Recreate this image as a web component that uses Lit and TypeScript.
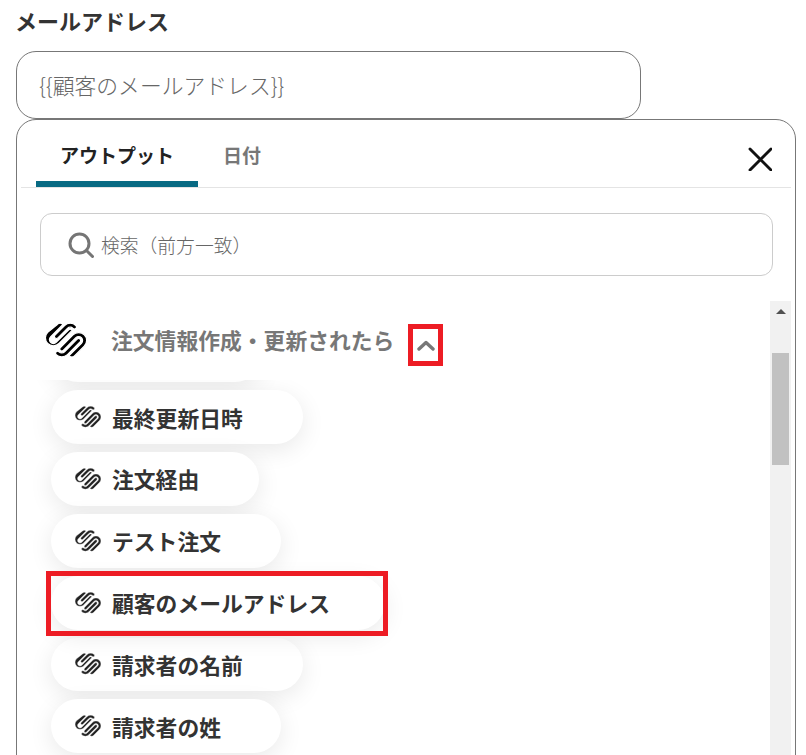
import { LitElement, css, html, svg } from 'lit'
import { customElement } from 'lit/decorators.js'

const LOGO = svg`<path d="M22.655 8.719c-1.802-1.801-4.726-1.801-6.564 0l-7.351 7.35c-.45.45-.45 1.2 0 1.65.45.449 1.2.449 1.65 0l7.351-7.351c.899-.899 2.362-.899 3.264 0 .9.9.9 2.364 0 3.264l-7.201 7.2c.9.899 2.364.899 3.264 0l5.55-5.549c1.86-1.864 1.86-4.789.037-6.564zm-2.475 2.437c-.451-.45-1.201-.45-1.65 0l-7.354 7.389c-.9.899-2.361.899-3.262 0-.45-.45-1.2-.45-1.65 0s-.45 1.2 0 1.65c1.801 1.801 4.726 1.801 6.564 0l7.351-7.35c.449-.487.449-1.239.001-1.689zm-2.439-7.875c-1.801-1.801-4.726-1.801-6.564 0l-5.55 5.55c-.45.45-.45 1.2 0 1.65s1.2.45 1.65 0l5.55-5.55c.899-.9 2.361-.9 3.263 0 .45.45 1.2.45 1.65 0 .45-.45.45-1.2.001-1.65zm-2.476 2.475c-.45-.45-1.2-.45-1.65 0l-7.351 7.351c-.899.9-2.362.9-3.263 0-.9-.9-.9-2.364 0-3.263l7.2-7.2c-.9-.9-2.361-.9-3.263 0L1.35 7.2c-1.8 1.801-1.8 4.726 0 6.564 1.801 1.801 4.725 1.801 6.564 0l7.35-7.351c.451-.488.451-1.238 0-1.688z"/>`

const CHIPS = [
  { label: '最終更新日時' },
  { label: '注文経由' },
  { label: 'テスト注文' },
  { label: '顧客のメールアドレス', picked: true },
  { label: '請求者の名前' },
  { label: '請求者の姓' },
]

@customElement('app-root')
export class AppRoot extends LitElement {
  render() {
    return html`
      <div class="page">
        <div class="label">メールアドレス</div>
        <div class="input">{{顧客のメールアドレス}}</div>
        <div class="panel">
          <div class="tabs">
            <div class="tab active">アウトプット</div>
            <div class="tab">日付</div>
            <svg class="close" viewBox="0 0 24 24" fill="none" stroke="#111" stroke-width="2.9" stroke-linecap="round">
              <path d="M2 2L23 23M23 2L2 23" />
            </svg>
          </div>
          <div class="search">
            <svg class="search-icon" viewBox="0 0 26 26" fill="none" stroke="#757575" stroke-width="3">
              <circle cx="11.5" cy="11.5" r="9.5" />
              <path d="M18.5 18.5L24.5 24.5" stroke-linecap="round" />
            </svg>
            <span>検索（前方一致）</span>
          </div>
          <div class="body">
            <div class="scroll">
              <div class="head">
                <svg class="logo" viewBox="0 1.8 24 20.4" fill="#000" stroke="#fff" stroke-width=".7">${LOGO}</svg>
                <span class="head-title">注文情報作成・更新されたら</span>
                <span class="toggle">
                  <svg viewBox="0 0 18 11" fill="none" stroke="#777" stroke-width="3.4" stroke-linecap="round" stroke-linejoin="round">
                    <path d="M2 9L9 2.5L16 9" />
                  </svg>
                </span>
              </div>
              <div class="chips">
                <div class="chip under-head"></div>
                ${CHIPS.map(
                  (c) => html`
                    <div class="chip ${c.picked ? 'picked' : ''}">
                      <svg class="chip-logo" viewBox="0 1.8 24 20.4" fill="#222" stroke="#fff" stroke-width=".35">${LOGO}</svg>
                      <span>${c.label}</span>
                      ${c.picked ? html`<div class="mark"></div>` : ''}
                    </div>
                  `,
                )}
              </div>
            </div>
            <div class="bar">
              <div class="arrow"></div>
              <div class="thumb"></div>
            </div>
          </div>
        </div>
      </div>
    `
  }

  static styles = css`
    :host {
      display: block;
      height: 755px;
      overflow: hidden;
      background: #fff;
      font-family: 'Noto Sans CJK JP', 'Liberation Sans', sans-serif;
      color: #333;
    }
    .page {
      padding: 0 10px 0 16px;
    }
    .label {
      height: 51px;
      padding-top: 4px;
      margin-left: -1px;
      box-sizing: border-box;
      font-size: 22px;
      line-height: 32px;
      font-weight: 700;
    }
    .input {
      width: 625px;
      height: 68px;
      box-sizing: border-box;
      padding: 0 0 2px 22px;
      display: flex;
      align-items: center;
      border: 1px solid #777;
      border-radius: 20px;
      font-size: 21.8px;
      font-weight: 300;
      color: #666;
    }
    .panel {
      width: 780px;
      height: 700px;
      box-sizing: border-box;
      padding: 0 4px;
      border: 1px solid #777;
      border-radius: 20px;
    }
    .tabs {
      display: flex;
      align-items: flex-end;
      height: 67px;
      padding-left: 15px;
      border-bottom: 1px solid #e4e4e4;
    }
    .tab {
      height: 67px;
      box-sizing: border-box;
      padding: 21px 26px 0 25px;
      font-size: 19px;
      line-height: 28px;
      font-weight: 700;
      color: #777;
    }
    .tab.active {
      width: 162px;
      padding: 21px 0 0 24px;
      color: #222;
      border-bottom: 6px solid #086a83;
      border-radius: 6px 6px 0 0;
    }
    .close {
      width: 24px;
      height: 24px;
      margin: 0 19px 16px auto;
    }
    .search {
      display: flex;
      align-items: center;
      gap: 7px;
      height: 63px;
      box-sizing: border-box;
      margin: 25px 18px 25px 19px;
      padding-left: 27px;
      border: 1px solid #ccc;
      border-radius: 12px;
      font-size: 18.8px;
      font-weight: 300;
      color: #666;
    }
    .search-icon {
      width: 26px;
      height: 26px;
    }
    .body {
      display: flex;
      height: 560px;
    }
    .scroll {
      flex: 1;
      overflow: hidden;
    }
    .head {
      position: relative;
      z-index: 2;
      display: flex;
      align-items: center;
      height: 79px;
      padding-left: 24px;
      background: #fff;
    }
    .logo {
      width: 42px;
      height: 35px;
      margin-right: 24px;
    }
    .head-title {
      margin-bottom: 2px;
      font-size: 21.8px;
      font-weight: 700;
      color: #777;
    }
    .toggle {
      display: flex;
      align-items: center;
      justify-content: center;
      width: 35px;
      height: 42px;
      box-sizing: border-box;
      margin: 9px 0 0 14px;
      border: 5px solid #ed1c24;
    }
    .toggle svg {
      width: 18px;
      height: 11px;
    }
    .chips {
      display: flex;
      flex-direction: column;
      align-items: flex-start;
      gap: 8px;
      margin-top: -51.7px;
      padding-left: 30px;
    }
    .chip {
      position: relative;
      display: flex;
      align-items: center;
      height: 53.85px;
      box-sizing: border-box;
      padding: 0 60px 0 24px;
      border-radius: 27px;
      background: #fff;
      box-shadow: 0 6px 24px rgba(0, 0, 0, 0.09);
      font-size: 21.8px;
      font-weight: 700;
      color: #333;
    }
    .chip.under-head {
      width: 211px;
    }
    .chip.picked {
      z-index: 1;
      padding-right: 55px;
    }
    .chip-logo {
      width: 26px;
      height: 22px;
      margin-right: 11px;
    }
    .mark {
      position: absolute;
      inset: -4.7px -3px -6.45px -5px;
      border: 5px solid #ed1c24;
    }
    .bar {
      width: 21px;
      flex: none;
      background: #f1f1f1;
    }
    .arrow {
      width: 0;
      margin: 8px auto 0;
      border: 5px solid transparent;
      border-top: 0;
      border-bottom: 5px solid #505050;
    }
    .thumb {
      height: 112px;
      margin: 39px 2px 0;
      background: #c1c1c1;
    }
  `
}

declare global {
  interface HTMLElementTagNameMap {
    'app-root': AppRoot
  }
}
